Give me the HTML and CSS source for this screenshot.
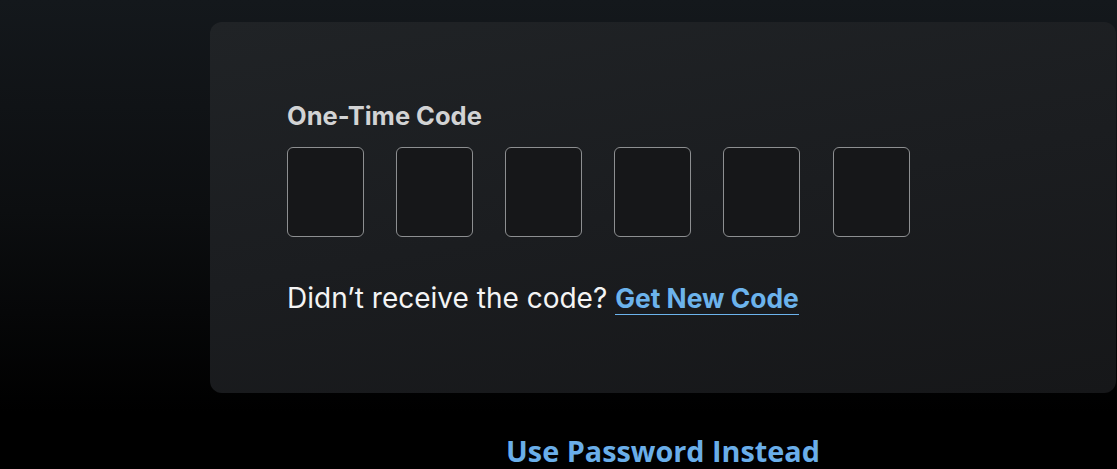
FILE: index.html
```html
<!DOCTYPE html>
<html lang="en">
<head>
  <meta charset="UTF-8">
  <meta name="viewport" content="width=device-width, initial-scale=1.0">
  <title>Verify Sign In</title>
  <link rel="stylesheet" href="styles.css">
</head>
<body>

  <div class="page">
    <div class="otp-card">
      <label class="otp-label" for="digit1">One-Time Code</label>
      <div class="otp-inputs">
        <input class="otp-digit" id="digit1" type="text" maxlength="1" inputmode="numeric">
        <input class="otp-digit" type="text" maxlength="1" inputmode="numeric">
        <input class="otp-digit" type="text" maxlength="1" inputmode="numeric">
        <input class="otp-digit" type="text" maxlength="1" inputmode="numeric">
        <input class="otp-digit" type="text" maxlength="1" inputmode="numeric">
        <input class="otp-digit" type="text" maxlength="1" inputmode="numeric">
      </div>
      <p class="resend">Didn’t receive the code? <a href="#" class="resend-link">Get New Code</a></p>
    </div>

    <a href="#" class="alt-login">Use Password Instead</a>
  </div>

</body>
</html>
```

FILE: styles.css
```css
body {
  margin: 0;
  height: 469px;
  overflow: hidden;
  font-family: 'Inter', 'Roboto', sans-serif;
  background: linear-gradient(180deg, #14181c 0%, #0c0e10 45%, #000 88%);
}

.page {
  padding: 22px 0 0 210px;
}

.otp-card {
  box-sizing: border-box;
  width: 906px;
  height: 371px;
  padding: 79px 0 0 77px;
  border-radius: 12px;
  background: linear-gradient(170deg, #202326 0%, #1b1d20 50%, #161719 100%);
}

.otp-label {
  display: block;
  font-size: 25.5px;
  font-weight: 700;
  line-height: 30px;
  color: #d2d3d4;
}

.otp-inputs {
  display: flex;
  gap: 32px;
  margin-top: 16px;
}

.otp-digit {
  box-sizing: border-box;
  width: 77px;
  height: 90px;
  border: 1px solid #8d8f91;
  border-radius: 6px;
  background-color: #161719;
  outline: none;
}

.otp-digit:nth-child(6) {
  margin-left: 1px;
}

.resend {
  margin: 44px 0 0;
  font-size: 28px;
  line-height: 34px;
  color: #f4f4f4;
}

.resend-link {
  font-size: 26.4px;
  font-weight: 700;
  color: #6cb3ec;
  text-decoration: none;
  border-bottom: 1px solid #6cb3ec;
}

.alt-login {
  display: block;
  width: 906px;
  margin-top: 38px;
  text-align: center;
  font-family: 'Open Sans', sans-serif;
  font-size: 28.8px;
  font-weight: 700;
  color: #6aaee9;
  text-decoration: none;
}
```
